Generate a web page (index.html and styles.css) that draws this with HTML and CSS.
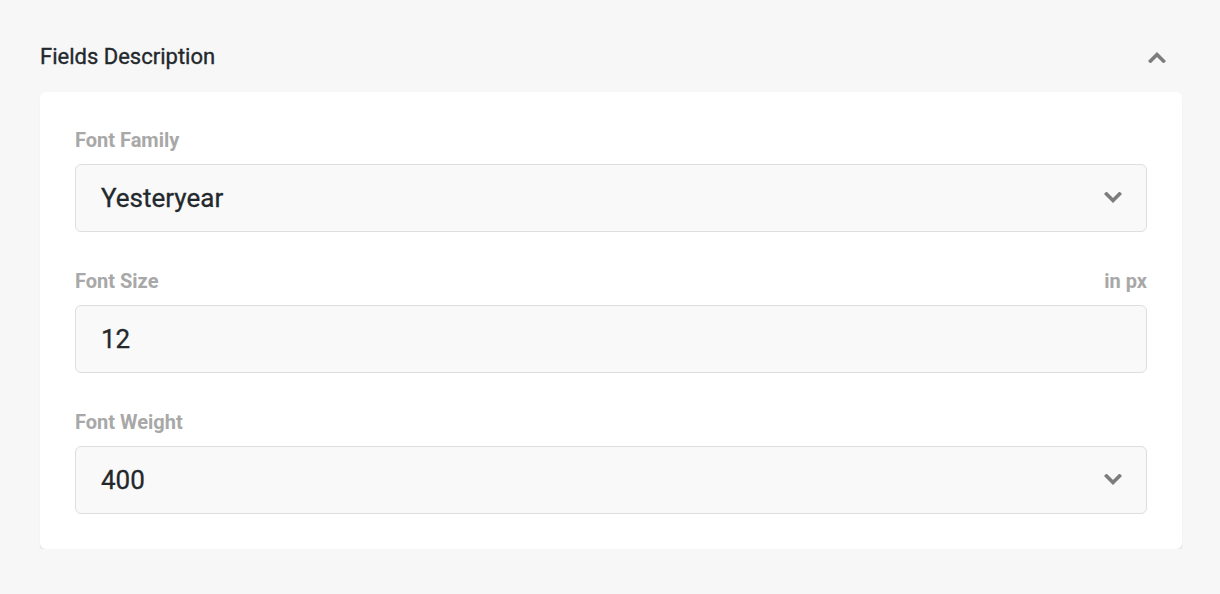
FILE: index.html
```html
<!DOCTYPE html>
<html lang="en">
<head>
<meta charset="utf-8">
<title>Fields Description</title>
<link rel="stylesheet" href="styles.css">
</head>
<body>
<div class="panel">
  <div class="panel-header">
    <h2 class="panel-title">Fields Description</h2>
    <svg class="chev chev-up" viewBox="0 0 18 12" width="18" height="12" aria-hidden="true"><path d="M2.5 10 L9 3.5 L15.5 10" fill="none" stroke="#7d7d7d" stroke-width="3.6" stroke-linecap="square"/></svg>
  </div>
  <div class="card">
    <div class="field">
      <div class="label-row"><span class="label">Font Family</span></div>
      <div class="control">
        <span class="value">Yesteryear</span>
        <svg class="chev" viewBox="0 0 18 12" width="18" height="12" aria-hidden="true"><path d="M2.5 2 L9 8.5 L15.5 2" fill="none" stroke="#7d7d7d" stroke-width="3.6" stroke-linecap="square"/></svg>
      </div>
    </div>
    <div class="field">
      <div class="label-row"><span class="label">Font Size</span><span class="label unit">in px</span></div>
      <div class="control">
        <span class="value">12</span>
      </div>
    </div>
    <div class="field">
      <div class="label-row"><span class="label">Font Weight</span></div>
      <div class="control">
        <span class="value">400</span>
        <svg class="chev" viewBox="0 0 18 12" width="18" height="12" aria-hidden="true"><path d="M2.5 2 L9 8.5 L15.5 2" fill="none" stroke="#7d7d7d" stroke-width="3.6" stroke-linecap="square"/></svg>
      </div>
    </div>
  </div>
</div>
</body>
</html>
```

FILE: styles.css
```css
html, body {
  margin: 0;
  padding: 0;
  background: #f7f7f7;
  font-family: Roboto, "Liberation Sans", Arial, sans-serif;
}

.panel {
  padding: 0 38px 0 40px;
}

.panel-header {
  display: flex;
  align-items: center;
  justify-content: space-between;
  padding: 43px 16px 21px 0;
}

.panel-title {
  margin: 0;
  font-size: 22px;
  line-height: 28px;
  font-weight: 400;
  color: #23282d;
  -webkit-text-stroke: 0.35px #23282d;
}

.card {
  background: #fff;
  border-radius: 6px;
  box-shadow: 0 2px 0 #e4e4e4, 0 3px 2px rgba(0, 0, 0, 0.05);
  padding: 35px;
  display: flex;
  flex-direction: column;
  gap: 36px;
}

.field {
  display: flex;
  flex-direction: column;
  gap: 10px;
}

.label-row {
  display: flex;
  justify-content: space-between;
  align-items: center;
}

.label {
  font-size: 20px;
  line-height: 27px;
  font-weight: 700;
  color: #a8a8a8;
}

.control {
  height: 68px;
  box-sizing: border-box;
  border: 1px solid #dedede;
  border-radius: 6px;
  background: #f9f9f9;
  padding: 0 24px 0 25px;
  display: flex;
  align-items: center;
  justify-content: space-between;
}

.value {
  font-size: 26px;
  font-weight: 400;
  color: #23282d;
  -webkit-text-stroke: 0.3px #23282d;
}

.chev {
  display: block;
}
```
